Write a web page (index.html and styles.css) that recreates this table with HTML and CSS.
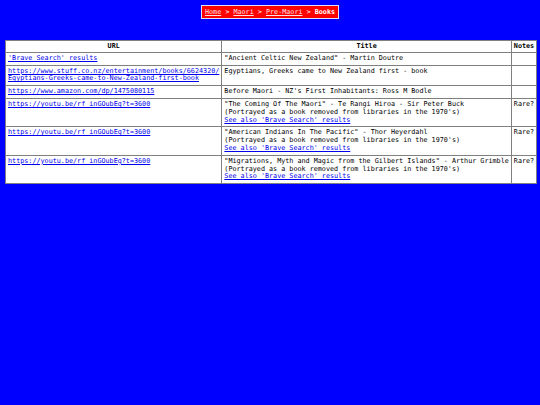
FILE: index.html
```html
<!DOCTYPE html>
<html>
<head>
<meta charset="utf-8">
<link rel="stylesheet" href="styles.css">
</head>
<body>
<div class="crumbs-wrap">
  <div class="crumbs"><a href="#">Home</a> &gt; <a href="#">Maori</a> &gt; <a href="#">Pre-Maori</a> &gt; <b>Books</b></div>
</div>
<table class="books">
  <tr><th class="c-url">URL</th><th class="c-title">Title</th><th class="c-notes">Notes</th></tr>
  <tr><td><a href="#">'Brave Search' results</a></td><td>"Ancient Celtic New Zealand" - Martin Doutre</td><td></td></tr>
  <tr><td><a href="#">https://www.stuff.co.nz/entertainment/books/6624320/<br>Egyptians-Greeks-came-to-New-Zealand-first-book</a></td><td>Egyptians, Greeks came to New Zealand first - book</td><td></td></tr>
  <tr><td><a href="#">https://www.amazon.com/dp/1475080115</a></td><td>Before Maori - NZ's First Inhabitants: Ross M Bodle</td><td></td></tr>
  <tr><td><a href="#">https://youtu.be/rf_inGOubEg?t=3600</a></td><td>"The Coming Of The Maori" - Te Rangi Hiroa - Sir Peter Buck<br>(Portrayed as a book removed from libraries in the 1970's)<br><a href="#">See also 'Brave Search' results</a></td><td>Rare?</td></tr>
  <tr><td><a href="#">https://youtu.be/rf_inGOubEg?t=3600</a></td><td>"American Indians In The Pacific" - Thor Heyerdahl<br>(Portrayed as a book removed from libraries in the 1970's)<br><a href="#">See also 'Brave Search' results</a></td><td>Rare?</td></tr>
  <tr><td><a href="#">https://youtu.be/rf_inGOubEg?t=3600</a></td><td>"Migrations, Myth and Magic from the Gilbert Islands" - Arthur Grimble<br>(Portrayed as a book removed from libraries in the 1970's)<br><a href="#">See also 'Brave Search' results</a></td><td>Rare?</td></tr>
</table>
</body>
</html>
```
FILE: styles.css
```css
html, body {
  margin: 0;
  padding: 0;
  background: #0000ff;
}
body {
  padding: 5px 5px;
  font-family: "DejaVu Sans Mono", monospace;
  font-size: 6.75px;
  line-height: 8px;
  color: #000;
}
.crumbs-wrap {
  display: flex;
  justify-content: center;
  margin-bottom: 21px;
}
.crumbs {
  background: #ff0000;
  color: #ffffff;
  border: 1px solid #e0e0ff;
  padding: 2px 3px;
  line-height: 8px;
}
.crumbs a {
  color: #ffe0e0;
}
.crumbs b {
  color: #ffffff;
}
.books {
  width: 100%;
  border-collapse: collapse;
  background: #ffffff;
  border: 1px solid #dcdcf0;
  line-height: 7.8px;
}
.books th, .books td {
  border: 1px solid #808080;
  padding: 2px 2px;
  vertical-align: top;
  text-align: left;
  white-space: nowrap;
}
.books th {
  text-align: center;
  font-weight: bold;
  padding: 2px 2px 1px;
}
.books a {
  color: #0000ee;
}
.books tr > :last-child {
  width: 20px;
}
```
